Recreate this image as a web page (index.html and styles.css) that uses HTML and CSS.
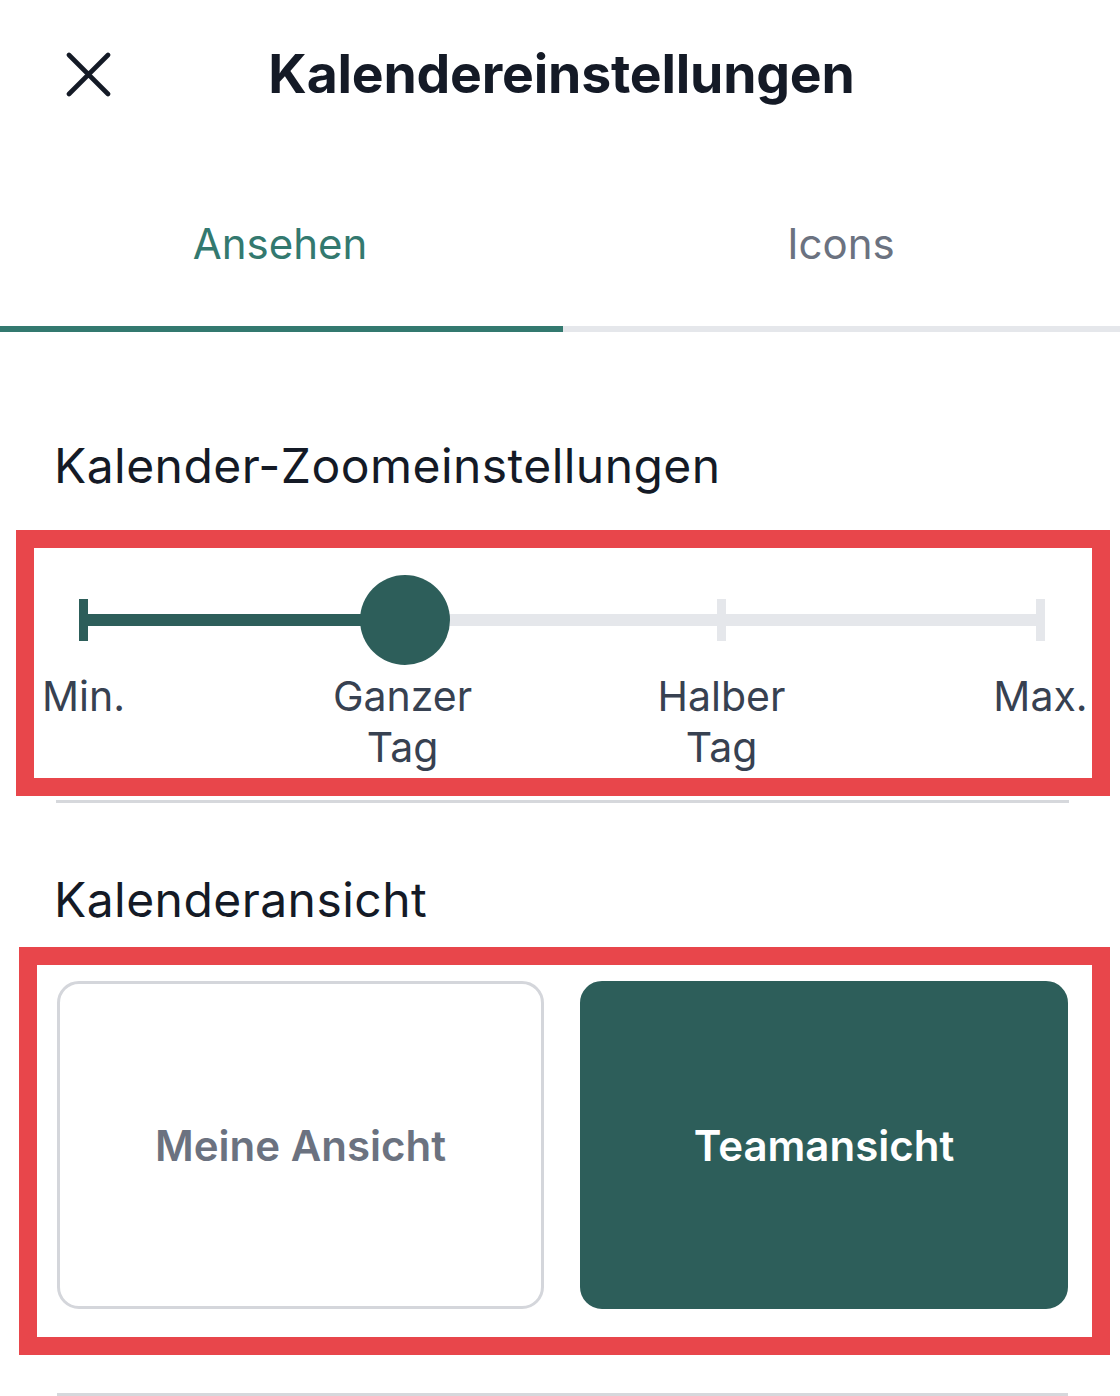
FILE: index.html
```html
<!DOCTYPE html>
<html lang="de">
<head>
<meta charset="utf-8">
<title>Kalendereinstellungen</title>
<link rel="stylesheet" href="styles.css">
</head>
<body>
<div class="sheet">
  <header class="header">
    <button class="close" aria-label="Schließen">
      <svg width="45" height="45" viewBox="0 0 45 45"><path d="M3 3 L42 42 M42 3 L3 42" stroke="#141a26" stroke-width="4.6" stroke-linecap="round" fill="none"/></svg>
    </button>
    <h1 class="title">Kalendereinstellungen</h1>
    <span></span>
  </header>

  <nav class="tabs">
    <div class="tab active">Ansehen</div>
    <div class="tab">Icons</div>
  </nav>

  <h2 class="section-title first">Kalender-Zoomeinstellungen</h2>

  <div class="mark mark-slider">
    <div class="slider">
      <div class="track">
        <span class="tick on"></span>
        <span class="tick"></span>
        <span class="tick"></span>
        <span class="tick"></span>
        <span class="thumb"></span>
      </div>
      <div class="labels">
        <span>Min.</span>
        <span>Ganzer<br>Tag</span>
        <span>Halber<br>Tag</span>
        <span>Max.</span>
      </div>
    </div>
  </div>
  <div class="divider first-div"></div>

  <h2 class="section-title second">Kalenderansicht</h2>

  <div class="mark mark-views">
    <div class="views">
      <div class="view">Meine Ansicht</div>
      <div class="view selected">Teamansicht</div>
    </div>
  </div>
  <div class="divider last-div"></div>
</div>
</body>
</html>
```

FILE: styles.css
```css
* { box-sizing: border-box; }

html, body {
  margin: 0;
  padding: 0;
  background: #ffffff;
}

body {
  font-family: "Inter", "Noto Sans", "Liberation Sans", sans-serif;
  color: #141a26;
  width: 1120px;
  height: 1396px;
  overflow: hidden;
}

.sheet {
  background: #ffffff;
}

.header {
  height: 148px;
  display: grid;
  grid-template-columns: 1fr auto 1fr;
  align-items: center;
  padding: 0 66px;
}

.close {
  justify-self: start;
  width: 45px;
  height: 45px;
  padding: 0;
  border: 0;
  background: none;
  display: flex;
}

.title {
  margin: 0 0 0 3px;
  font-size: 53.5px;
  font-weight: 700;
  color: #141a26;
  line-height: 66px;
  letter-spacing: -0.2px;
}

.tabs {
  display: grid;
  grid-template-columns: 563px 1fr;
}

.tab {
  height: 184px;
  padding-top: 12px;
  display: flex;
  align-items: center;
  justify-content: center;
  font-size: 42px;
  font-weight: 400;
  color: #6b7280;
  border-bottom: 6px solid #e5e7eb;
}

.tab.active {
  color: #33796f;
  border-bottom-color: #33796f;
  padding-right: 3px;
}

.tab + .tab {
  padding-right: 1px;
}

.section-title {
  margin: 0;
  padding-left: 54px;
  font-size: 48px;
  font-weight: 400;
  line-height: 57px;
  letter-spacing: 0.45px;
  color: #141a26;
}

.section-title.first { margin-top: 105px; }
.section-title.second { margin-top: 68px; }

.mark {
  border: 18px solid #e8464b;
  background: #ffffff;
}

.mark-slider {
  margin: 36px 10px 0 16px;
  padding: 51px 47px 5px 45px;
}

.track {
  position: relative;
  height: 42px;
  display: flex;
  justify-content: space-between;
  background: linear-gradient(to right, #2d5e5a 0, #2d5e5a 33.4%, #e5e7eb 33.4%, #e5e7eb 100%) center / 100% 12px no-repeat;
}

.tick {
  width: 9px;
  height: 42px;
  background: #e5e7eb;
}

.tick.on { background: #2d5e5a; }

.thumb {
  position: absolute;
  top: -24px;
  left: calc((100% - 9px) / 3 + 4.5px - 42px);
  width: 90px;
  height: 90px;
  border-radius: 50%;
  background: #2d5e5a;
}

.labels {
  margin: 30px -65.5px 0;
  display: flex;
  justify-content: space-between;
}

.labels span {
  width: 140px;
  text-align: center;
  font-size: 41px;
  line-height: 51px;
  color: #374151;
}

.divider {
  height: 3px;
  background: #d6d8dc;
}

.first-div {
  margin: 4px 51px 0 56px;
}

.mark-views {
  margin: 19px 10px 0 19px;
  padding: 16px 24px 28px 20px;
}

.views {
  display: grid;
  grid-template-columns: 487px 488px;
  column-gap: 36px;
}

.view {
  height: 328px;
  border-radius: 22px;
  border: 3px solid #d4d6db;
  display: flex;
  align-items: center;
  justify-content: center;
  font-size: 42px;
  font-weight: 600;
  color: #6b7280;
}

.view.selected {
  background: #2d5e5a;
  border-color: #2d5e5a;
  color: #ffffff;
}

.last-div {
  margin: 38px 52px 0 57px;
}
```
